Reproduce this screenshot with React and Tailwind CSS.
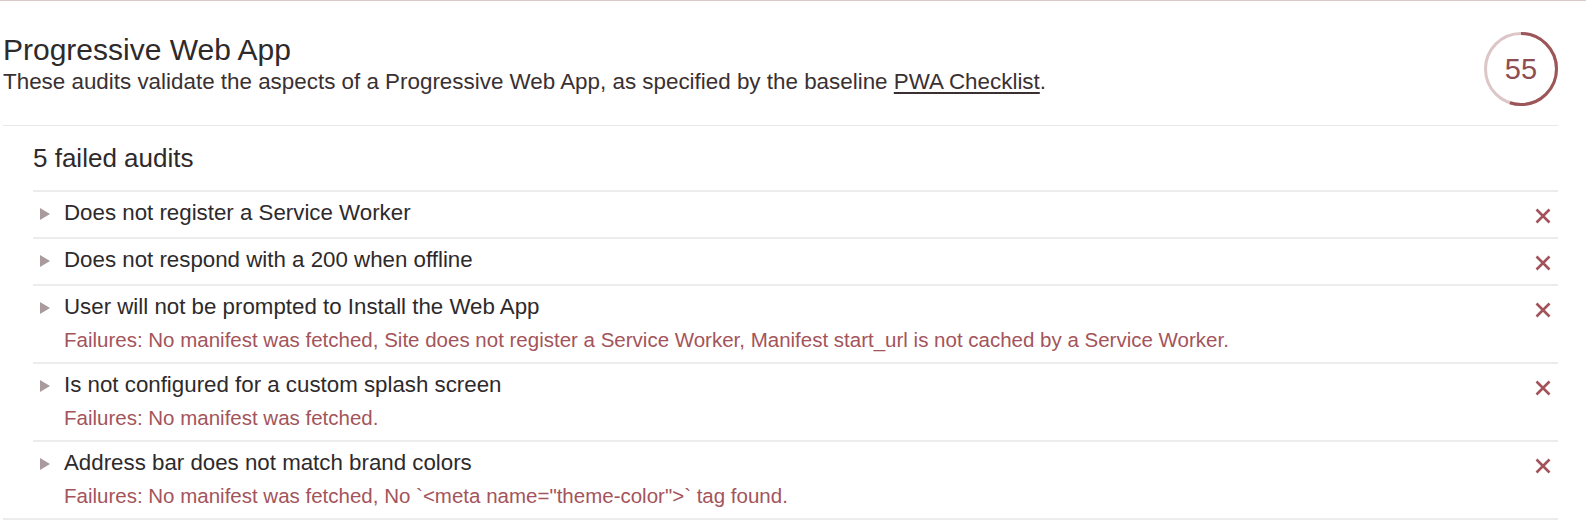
import React from 'react';

const audits = [
  { title: 'Does not register a Service Worker' },
  { title: 'Does not respond with a 200 when offline' },
  {
    title: 'User will not be prompted to Install the Web App',
    failures:
      'Failures: No manifest was fetched, Site does not register a Service Worker, Manifest start_url is not cached by a Service Worker.'
  },
  {
    title: 'Is not configured for a custom splash screen',
    failures: 'Failures: No manifest was fetched.'
  },
  {
    title: 'Address bar does not match brand colors',
    failures: 'Failures: No manifest was fetched, No `<meta name="theme-color">` tag found.'
  }
];

// score ring, drawn clockwise from the top
const ScoreGauge = ({ score }) => {
  const r = 35.5;
  const c = 2 * Math.PI * r;
  return (
    <div className="relative w-[74px] h-[74px] mt-[-1px] shrink-0">
      <svg width="74" height="74" viewBox="0 0 74 74">
        <circle cx="37" cy="37" r={r} fill="none" stroke="#dcc6c7" strokeWidth="3" />
        <circle
          cx="37"
          cy="37"
          r={r}
          fill="none"
          stroke="#9c5558"
          strokeWidth="3"
          strokeDasharray={`${(c * score) / 100} ${c}`}
          transform="rotate(-90 37 37)"
        />
      </svg>
      <div className="absolute inset-0 flex items-center justify-center text-[29px] leading-none text-[#8f4d51]">
        {score}
      </div>
    </div>
  );
};

const FailIcon = () => (
  <svg width="18" height="18" viewBox="0 0 18 18" className="shrink-0">
    <path d="M2.5 2.5 L15.5 15.5 M15.5 2.5 L2.5 15.5" stroke="#a2535a" strokeWidth="2.6" />
  </svg>
);

const Triangle = () => (
  <svg width="10" height="12" viewBox="0 0 10 12" className="shrink-0">
    <path d="M0 0 L10 6 L0 12 Z" fill="#a99b9d" />
  </svg>
);

const AuditRow = ({ audit }) => (
  <div className={`flex justify-between border-t-2 border-[#ececec] pt-[8px] ${audit.failures ? 'pb-[10px]' : 'pb-[11px]'}`}>
    <div className="flex flex-col">
      <div className="flex items-center h-[26px]">
        <div className="ml-[7px] mt-[2px]">
          <Triangle />
        </div>
        <span className="ml-[14px] text-[22.3px] leading-[26px] text-[#2e2a2b]">{audit.title}</span>
      </div>
      {audit.failures && (
        <div className="pl-[31px] mt-[8px] text-[20.5px] leading-[24px] text-[#a3545b]">{audit.failures}</div>
      )}
    </div>
    <div className="flex items-center h-[20px] mt-[6px] pr-[6px]">
      <FailIcon />
    </div>
  </div>
);

export default function App() {
  return (
    <div
      className="w-full bg-white border-t border-[#dbc8c8]"
      style={{ fontFamily: '"Liberation Sans", Arial, sans-serif' }}
    >
      <div className="w-[1558px] pl-[3px]">
        <div className="flex justify-between items-start pt-[32px] pb-[19px] border-b border-[#e8e8e8]">
          <div className="flex flex-col">
            <h1 className="text-[30px] leading-[34px] text-[#2e2a2b]">Progressive Web App</h1>
            <p className="mt-[2px] text-[22.4px] leading-[26px] text-[#3a3032]">
              These audits validate the aspects of a Progressive Web App, as specified by the baseline{' '}
              <span className="underline underline-offset-[3px]">PWA Checklist</span>.
            </p>
          </div>
          <ScoreGauge score={55} />
        </div>

        <div className="border-b-2 border-[#ececec]">
          <div className="pl-[30px]">
            <div className="pt-[17px] pb-[17px] text-[26px] leading-[30px] text-[#2e2a2b]">5 failed audits</div>
            {audits.map(audit => (
              <AuditRow key={audit.title} audit={audit} />
            ))}
          </div>
        </div>
      </div>
    </div>
  );
}
